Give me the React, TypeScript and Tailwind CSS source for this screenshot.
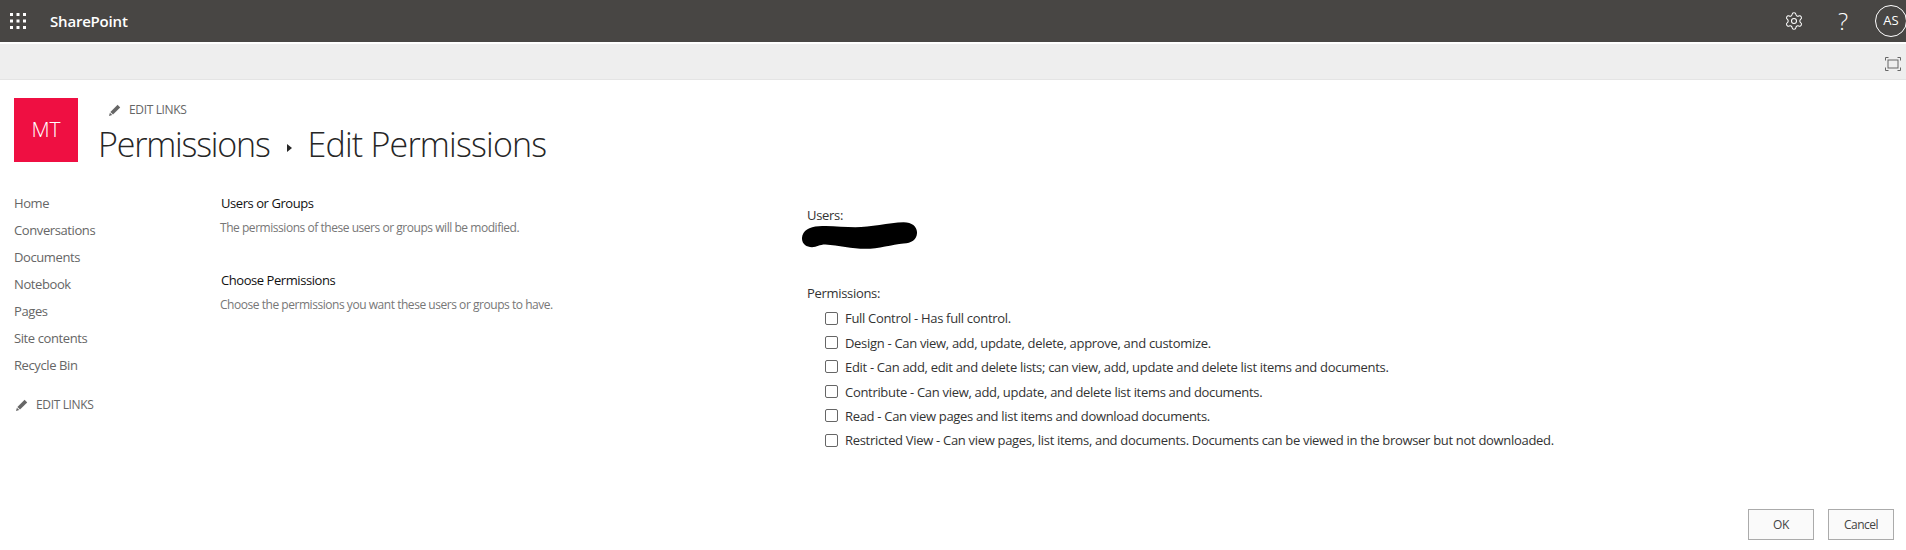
import { Settings } from "lucide-react";

const navLinks = ["Home", "Conversations", "Documents", "Notebook", "Pages", "Site contents", "Recycle Bin"];

const permissions = [
  "Full Control - Has full control.",
  "Design - Can view, add, update, delete, approve, and customize.",
  "Edit - Can add, edit and delete lists; can view, add, update and delete list items and documents.",
  "Contribute - Can view, add, update, and delete list items and documents.",
  "Read - Can view pages and list items and download documents.",
  "Restricted View - Can view pages, list items, and documents. Documents can be viewed in the browser but not downloaded.",
];

const Waffle = () => (
  <svg width="16" height="16" viewBox="0 0 16 16" fill="#fff">
    {[0, 6.5, 13].map((y) =>
      [0, 6.5, 13].map((x) => <rect key={`${x}-${y}`} x={x} y={y} width="3" height="3" />)
    )}
  </svg>
);

const Pencil = () => (
  <svg width="12" height="12" viewBox="0 0 12 12" fill="#666">
    <path d="M8.6.8 11.2 3.4 4 10.6 1.4 8z" />
    <path d="M.9 8.8 3.2 11.1 0 12z" />
  </svg>
);

const EditLinks = () => (
  <div className="flex items-center gap-2 text-[12px] leading-4 text-[#666666] tracking-[-0.35px]">
    <Pencil />
    <span>EDIT LINKS</span>
  </div>
);

const FocusIcon = () => (
  <svg width="16" height="14" viewBox="0 0 16 14" fill="none" stroke="#666" strokeWidth="1">
    <path d="M.5 3.5v-3h3M12.5.5h3v3M15.5 10.5v3h-3M3.5 13.5h-3v-3" />
    <rect x="3" y="3" width="10" height="8" />
  </svg>
);

// hand-drawn redaction over the user name
const Scribble = () => (
  <svg width="115" height="27" viewBox="40 103 345 80" className="-mt-[2px] -ml-[5px]">
    <path
      d="M40 150C42 128 62 116 90 115 125 112 165 118 200 118 245 118 300 104 345 103 372 103 386 118 385 136 384 156 368 165 345 167 310 170 270 183 230 183 190 183 150 172 110 170 92 170 85 178 70 178 52 178 39 168 40 150Z"
      fill="#000"
    />
  </svg>
);

const SectionInfo = ({ title, text }: { title: string; text: string }) => (
  <div>
    <h3 className="text-[13px] leading-[18px] text-[#111] tracking-[-0.44px] pl-px">{title}</h3>
    <p className="mt-2 text-[12px] leading-4 text-[#777777] tracking-[-0.46px]">{text}</p>
  </div>
);

export default function App() {
  return (
    <div className="h-[550px] bg-white font-['Open_Sans','Liberation_Sans',sans-serif] overflow-hidden">
      {/* Suite bar */}
      <header className="h-[42px] bg-[#484644] flex items-center text-white">
        <div className="ml-[10px] mr-6">
          <Waffle />
        </div>
        <span className="text-[15px] font-semibold tracking-[-0.2px]">SharePoint</span>
        <div className="ml-auto flex items-center">
          <Settings size={20} strokeWidth={1.25} className="mr-[34px]" />
          <span className="text-[24px] font-light mr-[27px] leading-none">?</span>
          <div className="w-8 h-8 rounded-full border border-white flex items-center justify-center text-[13px] -mr-px">
            AS
          </div>
        </div>
      </header>

      {/* Ribbon */}
      <div className="mt-[2px] h-[36px] bg-[#eeeeee] border-b border-[#e4e4e4] flex items-center justify-end pr-[5px]">
        <div className="mt-[4px] flex">
          <FocusIcon />
        </div>
      </div>

      {/* Title row */}
      <div className="pt-[18px] pl-[14px] flex">
        <div className="w-16 h-16 bg-[#ef0f42] text-white text-[21px] font-light flex items-center justify-center">
          MT
        </div>
        <div className="ml-[20px] pt-[4px]">
          <div className="pl-[11px]">
            <EditLinks />
          </div>
          <h1 className="mt-[3px] flex items-center text-[34px] leading-[46px] font-light text-[#262626]">
            <span className="tracking-[-1.2px]">Permissions</span>
            <span className="ml-[17px] mr-[16px] w-0 h-0 border-y-[4px] border-y-transparent border-l-[5px] border-l-[#262626] mt-2" />
            <span className="tracking-[-0.8px]">Edit Permissions</span>
          </h1>
        </div>
      </div>

      {/* Body */}
      <div className="flex mt-[23px] pl-[14px]">
        <nav className="w-[206px] shrink-0">
          <ul className="flex flex-col">
            {navLinks.map((link) => (
              <li key={link} className="h-[27px] flex items-center text-[13px] text-[#666666] tracking-[-0.4px]">
                {link}
              </li>
            ))}
          </ul>
          <div className="mt-[18px] pl-[2px]">
            <EditLinks />
          </div>
        </nav>

        <div className="w-[587px] shrink-0 pt-1">
          <SectionInfo title="Users or Groups" text="The permissions of these users or groups will be modified." />
          <div className="mt-[35px]">
            <SectionInfo title="Choose Permissions" text="Choose the permissions you want these users or groups to have." />
          </div>
        </div>

        <div className="flex-1 pt-4 text-[13px] text-[#333333] tracking-[-0.31px]">
          <div className="leading-[18px]">Users:</div>
          <Scribble />
          <div className="mt-[35px] leading-[18px]">Permissions:</div>
          <ul className="mt-[5px] ml-[18px] flex flex-col">
            {permissions.map((item) => (
              <li key={item} className="h-[24.4px] flex items-center gap-[7px]">
                <span className="w-[13px] h-[13px] border border-[#666] rounded-[2px] bg-white shrink-0 -mt-[2px]" />
                <span>{item}</span>
              </li>
            ))}
          </ul>
        </div>
      </div>

      {/* Actions */}
      <div className="flex justify-end gap-[14px] pr-[12px] mt-[56px]">
        <button className="w-[66px] h-[31px] border border-[#ababab] bg-[#fafafa] text-[12px] text-[#444] tracking-[-0.3px]">OK</button>
        <button className="w-[66px] h-[31px] border border-[#ababab] bg-[#fafafa] text-[12px] text-[#444] tracking-[-0.5px]">Cancel</button>
      </div>
    </div>
  );
}
